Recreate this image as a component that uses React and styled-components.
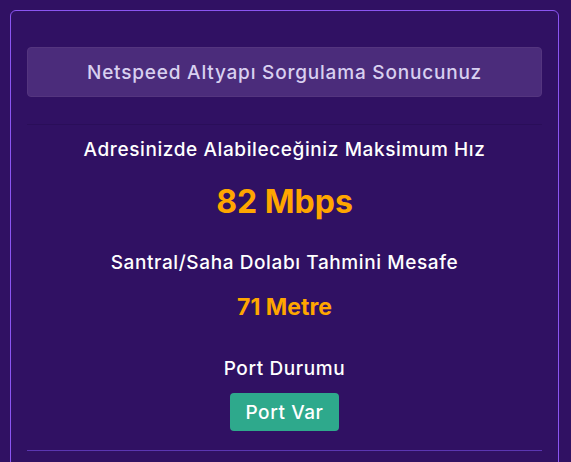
import React from "react";
import styled, { createGlobalStyle } from "styled-components";

const Global = createGlobalStyle`
  html, body { margin: 0; padding: 0; background: #301163; }
  body { font-family: "Inter", "Noto Sans", sans-serif; overflow: hidden; }
`;

const Page = styled.div`
  padding: 10px 12px 0 10px;
  height: 462px;
  overflow: hidden;
  box-sizing: border-box;
`;

const Card = styled.section`
  border: 1px solid #8b55f2;
  border-radius: 6px;
  padding: 36px 16px 40px;
  display: flex;
  flex-direction: column;
  align-items: stretch;
`;

const Header = styled.div`
  height: 50px;
  background: #4b2c7b;
  border: 1px solid #54357f;
  border-radius: 4px;
  box-sizing: border-box;
  display: flex;
  align-items: center;
  justify-content: center;
  color: #d8d0f0;
  font-size: 19px;
  font-weight: 500;
  letter-spacing: 0.8px;
`;

const Divider = styled.div`
  height: 1px;
  background: ${(p) => p.$color};
  margin-top: ${(p) => p.$top}px;
`;

const Section = styled.div`
  display: flex;
  flex-direction: column;
  align-items: center;
  margin-top: ${(p) => p.$top}px;
`;

const Label = styled.div`
  color: #ffffff;
  font-size: 19px;
  font-weight: 500;
  line-height: 22px;
  letter-spacing: 0.6px;
`;

const Value = styled.div`
  color: #ffa600;
  font-weight: 700;
  font-size: ${(p) => p.$size}px;
  line-height: ${(p) => p.$lh}px;
  margin-top: ${(p) => p.$top}px;
`;

const Badge = styled.div`
  margin-top: 13px;
  background: #2ea98c;
  color: #ffffff;
  border-radius: 4px;
  height: 38px;
  padding: 0 15px;
  display: flex;
  align-items: center;
  font-size: 19px;
  font-weight: 500;
  letter-spacing: 0.6px;
`;

export default function App() {
  return (
    <>
      <Global />
      <Page>
        <Card>
          <Header>Netspeed Altyapı Sorgulama Sonucunuz</Header>
          <Divider $color="rgba(20, 5, 50, 0.2)" $top={27} />
          <Section $top={14}>
            <Label>Adresinizde Alabileceğiniz Maksimum Hız</Label>
            <Value $size={32} $lh={40} $top={21}>82 Mbps</Value>
          </Section>
          <Section $top={30}>
            <Label>Santral/Saha Dolabı Tahmini Mesafe</Label>
            <Value $size={23} $lh={30} $top={18}>71 Metre</Value>
          </Section>
          <Section $top={36}>
            <Label>Port Durumu</Label>
            <Badge>Port Var</Badge>
          </Section>
          <Divider $color="#5b36b2" $top={19} />
        </Card>
      </Page>
    </>
  );
}
